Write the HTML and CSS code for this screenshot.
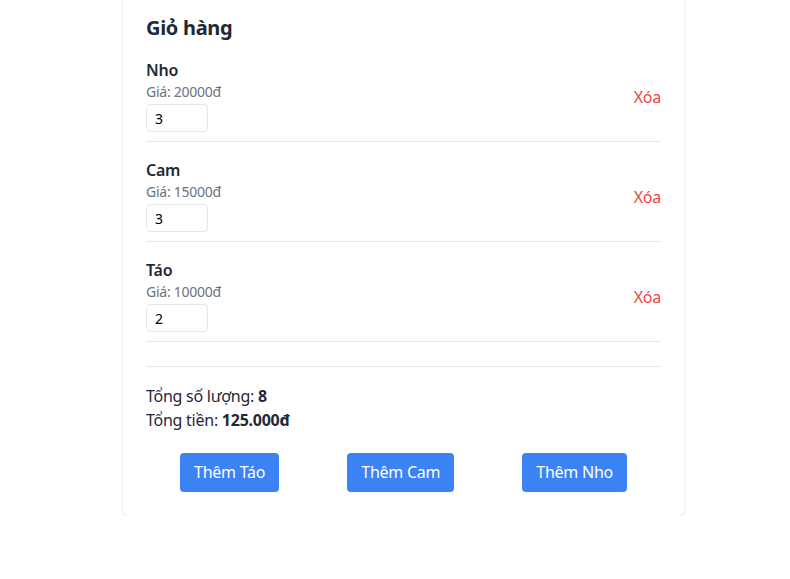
FILE: index.html
```html
<!DOCTYPE html>
<html lang="vi">
<head>
<meta charset="utf-8">
<title>Giỏ hàng</title>
<link rel="stylesheet" href="styles.css">
</head>
<body>
<div class="card">
  <h2 class="title">Giỏ hàng</h2>
  <div class="list">
    <div class="item">
      <div class="info">
        <div class="name">Nho</div>
        <div class="price">Giá: 20000đ</div>
        <input class="qty" type="number" value="3">
      </div>
      <button class="remove">Xóa</button>
    </div>
    <div class="item">
      <div class="info">
        <div class="name">Cam</div>
        <div class="price">Giá: 15000đ</div>
        <input class="qty" type="number" value="3">
      </div>
      <button class="remove">Xóa</button>
    </div>
    <div class="item">
      <div class="info">
        <div class="name">Táo</div>
        <div class="price">Giá: 10000đ</div>
        <input class="qty" type="number" value="2">
      </div>
      <button class="remove">Xóa</button>
    </div>
  </div>
  <div class="totals">
    <div>Tổng số lượng: <b>8</b></div>
    <div>Tổng tiền: <b>125.000đ</b></div>
  </div>
  <div class="actions">
    <button class="add">Thêm Táo</button>
    <button class="add">Thêm Cam</button>
    <button class="add">Thêm Nho</button>
  </div>
</div>
</body>
</html>
```
FILE: styles.css
```css
* { box-sizing: border-box; }
html, body { margin: 0; padding: 0; background: #fff; }
body {
  font-family: "Noto Sans", "Open Sans", sans-serif;
  color: #1f2937;
  font-size: 16px;
  line-height: 24px;
  letter-spacing: -0.25px;
}
.card {
  width: 561px;
  margin: -10px 0 0 123px;
  padding: 24px 23px;
  background: #fff;
  border-radius: 6px;
  box-shadow: 0 1px 3px rgba(0,0,0,0.1), 0 1px 2px rgba(0,0,0,0.06);
}
.title {
  margin: 0;
  font-size: 20px;
  line-height: 28px;
  font-weight: 700;
  color: #1f2937;
  letter-spacing: -0.3px;
}
.list { margin-bottom: 24px; }
.item {
  display: flex;
  align-items: center;
  justify-content: space-between;
  padding: 16px 0 9px;
  border-bottom: 1px solid #e5e7eb;
}
.name { font-weight: 600; font-size: 16px; line-height: 24px; }
.price { font-size: 14px; line-height: 20px; color: #6b7280; }
.qty {
  display: block;
  margin-top: 2px;
  width: 62px;
  height: 28px;
  padding: 0 8px;
  border: 1px solid #e5e7eb;
  border-radius: 4px;
  font-family: inherit;
  font-size: 14px;
  color: #000;
  -moz-appearance: textfield;
}
.qty::-webkit-inner-spin-button, .qty::-webkit-outer-spin-button { -webkit-appearance: none; margin: 0; }
.remove {
  background: none;
  border: 0;
  padding: 0;
  margin-top: 4px;
  font-family: inherit;
  font-size: 16px;
  line-height: 24px;
  letter-spacing: -0.25px;
  color: #ef4444;
  cursor: pointer;
}
.totals {
  border-top: 1px solid #e5e7eb;
  padding-top: 17px;
}
.totals b { font-weight: 700; }
.actions {
  display: flex;
  justify-content: space-around;
  margin-top: 21px;
}
.add {
  background: #3b82f6;
  color: #fff;
  border: 0;
  border-radius: 4px;
  padding: 7px 14px 8px;
  font-family: inherit;
  font-size: 16px;
  line-height: 24px;
  letter-spacing: -0.25px;
  cursor: pointer;
}
```
